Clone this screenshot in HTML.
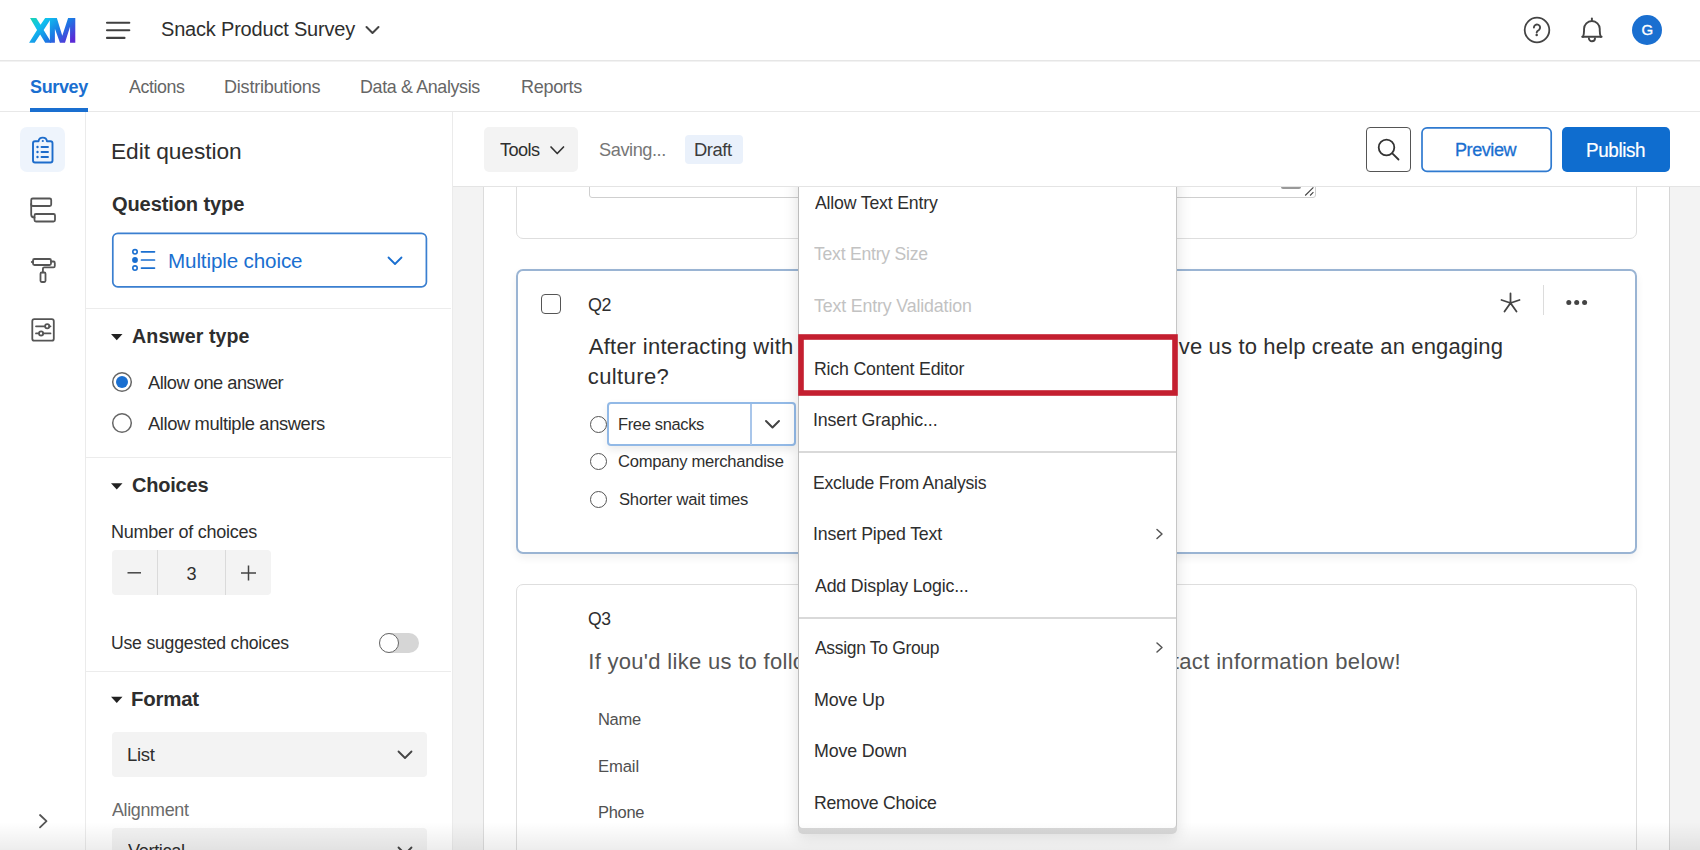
<!DOCTYPE html>
<html><head><meta charset="utf-8"><style>
*{box-sizing:border-box;margin:0;padding:0}
html,body{width:1700px;height:850px;overflow:hidden;background:#fff;font-family:"Liberation Sans",sans-serif}
.a{position:absolute}
.t{position:absolute;white-space:nowrap;line-height:1;transform-origin:0 0}
svg{position:absolute;overflow:visible}
</style></head><body>
<div class="a" style="left:452px;top:112px;width:1248px;height:738px;background:#f3f3f3"></div>
<div class="a" style="left:483px;top:150px;width:1187px;height:700px;background:#fff;border-left:1px solid #dcdcdc;border-right:1.5px solid #d6d6d6"></div>
<div class="a" style="left:516px;top:140px;width:1121px;height:98.5px;border:1.5px solid #dedede;border-radius:7px"></div>
<div class="a" style="left:588.5px;top:140px;width:727px;height:58px;border:1.5px solid #cfcfcf;border-radius:3px"></div>
<div class="a" style="left:1281.2px;top:186.6px;width:19.5px;height:2.6px;background:#999;border-radius:0 0 2px 2px"></div>
<svg style="left:0;top:0" width="1" height="1"><path d="M1305.2 195.5 L1313.4 187.3 M1310.1 195.5 L1313.4 192.2" stroke="#444" stroke-width="1.1"/></svg>
<div class="a" style="left:516px;top:269px;width:1121px;height:285px;border:2px solid #9ab4d3;border-radius:7px;box-shadow:0 4px 9px rgba(0,0,0,0.06)"></div>
<div class="a" style="left:541px;top:294px;width:20px;height:20px;border:1.5px solid #555;border-radius:4px"></div>
<div class="a" style="left:1543px;top:285px;width:1px;height:30px;background:#dcdcdc"></div>
<svg style="left:0;top:0" width="1" height="1">
 <g stroke="#444" stroke-width="1.8" stroke-linecap="round">
  <path d="M1510.5 293.5 V303 M1510.5 303 L1501.5 300 M1510.5 303 L1519.5 300 M1510.5 303 L1504.5 311.5 M1510.5 303 L1516.5 311.5"/>
 </g>
 <g fill="#444"><circle cx="1568.8" cy="302.6" r="2.5"/><circle cx="1576.7" cy="302.6" r="2.5"/><circle cx="1584.6" cy="302.6" r="2.5"/></g>
</svg>
<div class="a" style="left:589.5px;top:415.5px;width:17px;height:17px;border:1.5px solid #555;border-radius:50%"></div>
<div class="a" style="left:589.5px;top:453px;width:17px;height:17px;border:1.5px solid #555;border-radius:50%"></div>
<div class="a" style="left:589.5px;top:490.5px;width:17px;height:17px;border:1.5px solid #555;border-radius:50%"></div>
<div class="a" style="left:607px;top:402px;width:189px;height:44px;background:#fff;border:2px solid #92b9e6;border-radius:4px;box-shadow:0 4px 8px rgba(0,0,0,0.08)"></div>
<div class="a" style="left:749.5px;top:404px;width:2px;height:40.5px;background:#a9c6ea"></div>
<svg style="left:0;top:0" width="1" height="1"><path d="M766 421 L772.5 427.5 L779 421" fill="none" stroke="#444" stroke-width="2" stroke-linecap="round" stroke-linejoin="round"/></svg>

<div class="t" style="left:588.03px;top:295.56px;font-size:18.17px;letter-spacing:-0.336px;font-weight:400;color:#2e2e2e;transform:scaleX(0.985);">Q2</div>
<div class="t" style="left:588.75px;top:335.8px;font-size:22px;letter-spacing:0.246px;font-weight:400;color:#2e2e2e;">After interacting with</div>
<div class="t" style="left:1178.8px;top:335.8px;font-size:22px;letter-spacing:0.158px;font-weight:400;color:#2e2e2e;">ve us to help create an engaging</div>
<div class="t" style="left:587.87px;top:365.55px;font-size:22px;letter-spacing:0.38px;font-weight:400;color:#2e2e2e;">culture?</div>
<div class="t" style="left:617.93px;top:415.71px;font-size:17.1px;letter-spacing:-0.338px;font-weight:400;color:#2e2e2e;transform:scaleX(0.9616);">Free snacks</div>
<div class="t" style="left:618.42px;top:453.46px;font-size:17.1px;letter-spacing:-0.274px;font-weight:400;color:#2e2e2e;transform:scaleX(0.9709);">Company merchandise</div>
<div class="t" style="left:618.59px;top:491.21px;font-size:17.1px;letter-spacing:-0.217px;font-weight:400;color:#2e2e2e;transform:scaleX(0.972);">Shorter wait times</div>
<div class="a" style="left:516px;top:584px;width:1121px;height:300px;border:1.5px solid #dedede;border-radius:7px"></div>
<div class="t" style="left:588.05px;top:610.87px;font-size:17.81px;letter-spacing:-0.323px;font-weight:400;color:#2e2e2e;transform:scaleX(0.9854);">Q3</div>
<div class="t" style="left:588.22px;top:650.55px;font-size:22px;letter-spacing:0.3px;font-weight:400;color:#555;">If you'd like us to follow</div>
<div class="t" style="left:1172.82px;top:650.55px;font-size:22px;letter-spacing:0.35px;font-weight:400;color:#555;">tact information below!</div>
<div class="t" style="left:597.93px;top:711.88px;font-size:16.9px;letter-spacing:-0.311px;font-weight:400;color:#505050;transform:scaleX(0.9779);">Name</div>
<div class="t" style="left:597.92px;top:758.63px;font-size:16.9px;letter-spacing:-0.138px;font-weight:400;color:#505050;transform:scaleX(0.9859);">Email</div>
<div class="t" style="left:598.08px;top:804.74px;font-size:16.9px;letter-spacing:-0.288px;font-weight:400;color:#505050;transform:scaleX(0.9748);">Phone</div>
<div class="a" style="left:798px;top:150px;width:378.5px;height:683.5px;background:#d8d8d8;border-radius:0 0 5px 5px;box-shadow:0 2px 16px rgba(0,0,0,0.13)"></div>
<div class="a" style="left:798px;top:150px;width:378.5px;height:677.5px;background:#fff;border-left:1px solid #bdbdbd;border-right:1px solid #c6c6c6;border-radius:0 0 4px 4px"></div>
<div class="a" style="left:799px;top:451px;width:377px;height:1.5px;background:#d9d9d9"></div>
<div class="a" style="left:799px;top:617px;width:377px;height:1.5px;background:#d9d9d9"></div>
<svg style="left:0;top:0" width="1" height="1"><g fill="none" stroke="#555" stroke-width="1.5" stroke-linecap="round" stroke-linejoin="round">
<path d="M1157 529.5 L1162 534 L1157 538.5"/><path d="M1157 643 L1162 647.5 L1157 652"/></g></svg>

<div class="t" style="left:814.5px;top:194.02px;font-size:18.1px;letter-spacing:-0.188px;font-weight:400;color:#2e2e2e;transform:scaleX(0.9776);">Allow Text Entry</div>
<div class="t" style="left:814.15px;top:245.22px;font-size:18.1px;letter-spacing:-0.232px;font-weight:400;color:#c2c2c2;transform:scaleX(0.9721);">Text Entry Size</div>
<div class="t" style="left:814.14px;top:296.72px;font-size:18.1px;letter-spacing:-0.144px;font-weight:400;color:#c2c2c2;transform:scaleX(0.9819);">Text Entry Validation</div>
<div class="t" style="left:813.58px;top:359.62px;font-size:18.1px;letter-spacing:-0.179px;font-weight:400;color:#2e2e2e;transform:scaleX(0.9788);">Rich Content Editor</div>
<div class="t" style="left:813.4px;top:410.87px;font-size:18.1px;letter-spacing:-0.126px;font-weight:400;color:#2e2e2e;transform:scaleX(0.9836);">Insert Graphic...</div>
<div class="t" style="left:813.29px;top:473.87px;font-size:18.1px;letter-spacing:-0.235px;font-weight:400;color:#2e2e2e;transform:scaleX(0.9735);">Exclude From Analysis</div>
<div class="t" style="left:813.4px;top:525.12px;font-size:18.1px;letter-spacing:-0.163px;font-weight:400;color:#2e2e2e;transform:scaleX(0.98);">Insert Piped Text</div>
<div class="t" style="left:815.0px;top:576.87px;font-size:18.1px;letter-spacing:-0.163px;font-weight:400;color:#2e2e2e;transform:scaleX(0.9801);">Add Display Logic...</div>
<div class="t" style="left:815.0px;top:639.37px;font-size:18.1px;letter-spacing:-0.32px;font-weight:400;color:#2e2e2e;transform:scaleX(0.9652);">Assign To Group</div>
<div class="t" style="left:813.57px;top:690.87px;font-size:18.1px;letter-spacing:-0.135px;font-weight:400;color:#2e2e2e;transform:scaleX(0.9883);">Move Up</div>
<div class="t" style="left:813.57px;top:742.12px;font-size:18.1px;letter-spacing:-0.169px;font-weight:400;color:#2e2e2e;transform:scaleX(0.9853);">Move Down</div>
<div class="t" style="left:813.59px;top:793.62px;font-size:18.1px;letter-spacing:-0.244px;font-weight:400;color:#2e2e2e;transform:scaleX(0.9763);">Remove Choice</div>
<svg style="left:0;top:0" width="1" height="1"><rect x="801" y="337" width="374" height="56" fill="none" stroke="#c41f30" stroke-width="5.6"/></svg>
<div class="a" style="left:452px;top:112px;width:1248px;height:74.5px;background:#fff;border-bottom:1px solid #e4e4e4"></div>
<div class="a" style="left:483.5px;top:127px;width:94.5px;height:45px;background:#f3f3f3;border-radius:5px"></div>
<svg style="left:0;top:0" width="1" height="1"><path d="M551 147 L557.25 153.5 L563.5 147" fill="none" stroke="#333" stroke-width="1.7" stroke-linecap="round" stroke-linejoin="round"/></svg>
<div class="a" style="left:685px;top:135px;width:57.5px;height:29px;background:#eaf1fb;border-radius:4px"></div>
<div class="a" style="left:1366px;top:127px;width:45px;height:45px;border:1.5px solid #555;border-radius:4px"></div>
<svg style="left:0;top:0" width="1" height="1"><g fill="none" stroke="#333" stroke-width="1.8" stroke-linecap="round"><circle cx="1386.5" cy="147.5" r="7.8"/><path d="M1392.3 153.3 L1398.5 159.5"/></g></svg>
<svg style="left:0;top:0" width="1" height="1"><rect x="1422" y="127.8" width="129.2" height="43.6" rx="5" fill="none" stroke="#2f7ad0" stroke-width="1.7"/></svg>
<div class="a" style="left:1562px;top:127px;width:108px;height:45px;background:#0f6dcf;border-radius:5px"></div>

<div class="t" style="left:499.64px;top:140.38px;font-size:19.26px;letter-spacing:-0.593px;font-weight:400;color:#2e2e2e;transform:scaleX(0.943);">Tools</div>
<div class="t" style="left:598.52px;top:140.38px;font-size:19.26px;letter-spacing:-0.467px;font-weight:400;color:#777;transform:scaleX(0.9456);">Saving...</div>
<div class="t" style="left:694.28px;top:140.38px;font-size:19.26px;letter-spacing:-0.436px;font-weight:400;color:#3c3c3c;transform:scaleX(0.9547);">Draft</div>
<div class="t" style="left:1455.31px;top:140.69px;font-size:18.9px;letter-spacing:-0.466px;font-weight:400;color:#1a6fd0;transform:scaleX(0.9557);-webkit-text-stroke:0.3px #1a6fd0;">Preview</div>
<div class="t" style="left:1585.99px;top:141.06px;font-size:19.69px;letter-spacing:-0.409px;font-weight:400;color:#fff;transform:scaleX(0.9587);-webkit-text-stroke:0.2px #fff;">Publish</div>
<div class="a" style="left:0;top:0;width:1700px;height:112px;background:#fff"></div>
<div class="a" style="left:0;top:60px;width:1700px;height:1px;background:#e6e6e6"></div>
<div class="a" style="left:0;top:61px;width:1700px;height:1px;background:#f2f2f2"></div>
<div class="a" style="left:0;top:111px;width:1700px;height:1px;background:#e8e8e8"></div>
<div class="a" style="left:30px;top:108px;width:58px;height:3.5px;background:#1a6fd0"></div>
<svg style="left:0;top:0" width="1" height="1">
 <defs><linearGradient id="xmg" x1="30" y1="13" x2="62" y2="49" gradientUnits="userSpaceOnUse">
  <stop offset="0" stop-color="#1fdb9c"/><stop offset="0.33" stop-color="#0fc0ef"/><stop offset="0.66" stop-color="#1a7ae4"/><stop offset="1" stop-color="#5a2ad6"/></linearGradient></defs>
 <g fill="url(#xmg)">
  <path d="M30.05 17.88 H36.26 L40.53 24.87 L45.19 17.88 H51.41 L43.64 29.92 L51.41 42.74 H45.19 L40.15 34.58 L34.71 42.74 H29.08 L37.04 29.92 Z"/>
  <path d="M49.85 17.88 H56.84 L62.28 35.75 L68.1 17.88 H75.29 V42.74 H70.05 V26.82 L65.0 42.74 H59.95 L54.9 28.76 V42.74 H49.85 Z"/>
 </g>
 <g stroke="#404040" stroke-width="2.1" stroke-linecap="round"><path d="M107 22.7 H129.3 M107 30.3 H129.3 M107 37.9 H124.5"/></g>
 <path d="M366.5 27 L372.5 33 L378.5 27" fill="none" stroke="#444" stroke-width="2" stroke-linecap="round" stroke-linejoin="round"/>
 <circle cx="1537" cy="30" r="12.3" fill="none" stroke="#444" stroke-width="1.8"/>
 <path d="M1533.9 27.6 A3.1 3.1 0 1 1 1538.9 30 Q1536.7 31.2 1536.7 32.6" fill="none" stroke="#444" stroke-width="1.9" stroke-linecap="round"/><circle cx="1536.7" cy="35.1" r="1.25" fill="#444"/>
 <g fill="none" stroke="#444" stroke-width="1.9" stroke-linejoin="round" stroke-linecap="round">
  <path d="M1582.2 36.8 H1601.6"/>
  <path d="M1583 36.8 Q1584.05 34.5 1584.05 30.5 V28.85 A7.85 7.85 0 0 1 1599.75 28.85 V30.5 Q1599.75 34.5 1600.8 36.8"/>
  <path d="M1588.9 38.2 A3.05 3.05 0 0 0 1595 38.2"/><path d="M1591.9 18.4 V20"/>
 </g>
 <circle cx="1647" cy="30" r="15" fill="#1a6fd0"/>
 <text x="1647.3" y="35.3" text-anchor="middle" font-family="Liberation Sans" font-weight="400" font-size="15" fill="#fff" stroke="#fff" stroke-width="0.35">G</text>
</svg>

<div class="t" style="left:160.7px;top:19.1px;font-size:20.35px;letter-spacing:-0.184px;font-weight:400;color:#2e2e2e;transform:scaleX(0.9822);">Snack Product Survey</div>
<div class="t" style="left:29.64px;top:78.09px;font-size:18.6px;letter-spacing:-0.374px;font-weight:700;color:#1a6fd0;transform:scaleX(0.9688);">Survey</div>
<div class="t" style="left:128.8px;top:78.09px;font-size:18.6px;letter-spacing:-0.411px;font-weight:400;color:#666;transform:scaleX(0.9574);">Actions</div>
<div class="t" style="left:224.46px;top:78.09px;font-size:18.6px;letter-spacing:-0.237px;font-weight:400;color:#666;transform:scaleX(0.9708);">Distributions</div>
<div class="t" style="left:360.37px;top:78.09px;font-size:18.6px;letter-spacing:-0.355px;font-weight:400;color:#666;transform:scaleX(0.96);">Data &amp; Analysis</div>
<div class="t" style="left:520.96px;top:78.09px;font-size:18.6px;letter-spacing:-0.315px;font-weight:400;color:#666;transform:scaleX(0.9691);">Reports</div>
<div class="a" style="left:85px;top:112px;width:1px;height:738px;background:#ebebeb"></div>
<div class="a" style="left:20px;top:126.5px;width:45px;height:45.5px;background:#eef4fc;border-radius:7px"></div>
<svg style="left:0;top:0" width="1" height="1">
 <g fill="none" stroke="#1d6ccb" stroke-width="1.9" stroke-linejoin="round" stroke-linecap="round">
  <path d="M38.5 141.3 H35 a2 2 0 0 0 -2 2 V160.5 a2 2 0 0 0 2 2 H50.5 a2 2 0 0 0 2 -2 V143.3 a2 2 0 0 0 -2 -2 H47 A4.3 4.3 0 0 0 38.5 141.3 Z"/>
  <path d="M41.5 147 H48 M41.5 152 H48 M41.5 157 H48"/>
 </g>
 <g fill="#1d6ccb"><circle cx="42.8" cy="141" r="1.1"/><circle cx="37.5" cy="147" r="1.2"/><circle cx="37.5" cy="152" r="1.2"/><circle cx="37.5" cy="157" r="1.2"/></g>
 <g fill="none" stroke="#555" stroke-width="1.8" stroke-linejoin="round" stroke-linecap="round">
  <rect x="31.2" y="198.5" width="20" height="7.5" rx="1.5"/>
  <rect x="34.5" y="214" width="20.5" height="7.5" rx="1.5"/>
  <path d="M31.2 204 V214.5 Q31.2 217.5 34.5 217.5"/>
  <rect x="33" y="259" width="18" height="6" rx="1.5"/>
  <path d="M51 261.5 H53.5 Q54.8 261.5 54.8 263 V266 Q54.8 267.4 53.4 267.4 H44.3 Q42.9 267.4 42.9 268.8 V272.3"/>
  <path d="M33 262 H31.8"/>
  <rect x="40.5" y="272.5" width="5" height="9.5" rx="1.2"/>
  <rect x="32.3" y="319.2" width="21.5" height="21.5" rx="2"/>
  <path d="M36 326.3 H45 M49.3 326.3 H50.5 M36 333.4 H39 M43.2 333.4 H50.5"/>
  <circle cx="47.2" cy="326.3" r="2.1"/><circle cx="41.1" cy="333.4" r="2.1"/>
  <path d="M40 815 L46.5 821.2 L40 827.4"/>
 </g>
</svg>

<div class="a" style="left:451.5px;top:112px;width:1.2px;height:738px;background:#ebebeb"></div>
<div class="a" style="left:86px;top:308px;width:365px;height:1px;background:#ececec"></div>
<div class="a" style="left:86px;top:457px;width:365px;height:1px;background:#ececec"></div>
<div class="a" style="left:86px;top:670.5px;width:365px;height:1px;background:#ececec"></div>
<svg style="left:0;top:0" width="1" height="1"><rect x="112.8" y="233.3" width="313.6" height="53.6" rx="5" fill="none" stroke="#3a7fd0" stroke-width="1.7"/></svg>
<svg style="left:0;top:0" width="1" height="1">
 <g fill="none" stroke="#1a6fd0" stroke-width="1.6"><circle cx="135" cy="251.8" r="2.2"/><circle cx="135" cy="268.1" r="2.2"/></g>
 <circle cx="135" cy="260" r="2.9" fill="#1a6fd0"/>
 <g stroke="#1a6fd0" stroke-width="1.7" stroke-linecap="round"><path d="M141.5 251.8 H154.5 M141.5 260 H154.5 M141.5 268.1 H154.5"/></g>
 <path d="M388.5 257.5 L395 264 L401.5 257.5" fill="none" stroke="#1a6fd0" stroke-width="1.8" stroke-linecap="round" stroke-linejoin="round"/>
 <g fill="#222"><path d="M111 334 H122.5 L116.75 340.2 Z"/><path d="M111 483.2 H122.5 L116.75 489.4 Z"/><path d="M111 696.7 H122.5 L116.75 702.9 Z"/></g>
 <circle cx="122" cy="382" r="9.3" fill="#fff" stroke="#666" stroke-width="1.5"/>
 <circle cx="122" cy="382" r="6" fill="#1a6fd0"/>
 <circle cx="122" cy="423" r="9.3" fill="#fff" stroke="#666" stroke-width="1.5"/>
 <path d="M127.5 572.8 H141" stroke="#444" stroke-width="1.5"/>
 <path d="M241 573 H256 M248.5 565.5 V580.5" stroke="#444" stroke-width="1.5"/>
 <path d="M398.5 751.5 L405 758 L411.5 751.5" fill="none" stroke="#444" stroke-width="1.8" stroke-linecap="round" stroke-linejoin="round"/>
 <path d="M398.5 847.5 L405 854 L411.5 847.5" fill="none" stroke="#444" stroke-width="1.8" stroke-linecap="round" stroke-linejoin="round"/>
</svg>
<div class="a" style="left:112px;top:550px;width:159px;height:45px;background:#f3f3f3;border-radius:4px"></div>
<div class="a" style="left:157px;top:550px;width:1px;height:45px;background:#dadada"></div>
<div class="a" style="left:225px;top:550px;width:1px;height:45px;background:#dadada"></div>
<svg style="left:0;top:0" width="1" height="1">
 <path d="M127.5 572.8 H141" stroke="#444" stroke-width="1.5"/>
 <path d="M241 573 H256 M248.5 565.5 V580.5" stroke="#444" stroke-width="1.5"/>
</svg>
<div class="a" style="left:379px;top:633px;width:40px;height:20px;background:#d6d6d6;border-radius:10px"></div>
<div class="a" style="left:379px;top:633px;width:20px;height:20px;background:#fff;border:1.5px solid #666;border-radius:50%"></div>
<div class="a" style="left:112px;top:732px;width:315px;height:45px;background:#f3f3f3;border-radius:4px"></div>
<div class="a" style="left:112px;top:828px;width:315px;height:45px;background:#f3f3f3;border-radius:4px"></div>
<svg style="left:0;top:0" width="1" height="1">
 <path d="M398.5 751.5 L405 758 L411.5 751.5" fill="none" stroke="#444" stroke-width="1.8" stroke-linecap="round" stroke-linejoin="round"/>
 <path d="M398.5 847.5 L405 854 L411.5 847.5" fill="none" stroke="#444" stroke-width="1.8" stroke-linecap="round" stroke-linejoin="round"/>
</svg>

<div class="t" style="left:111.18px;top:139.5px;font-size:22.82px;letter-spacing:-0.051px;font-weight:400;color:#2e2e2e;transform:scaleX(0.9952);">Edit question</div>
<div class="t" style="left:112.2px;top:194.2px;font-size:20.35px;letter-spacing:-0.139px;font-weight:700;color:#2e2e2e;transform:scaleX(0.9875);">Question type</div>
<div class="t" style="left:167.95px;top:250.51px;font-size:20.93px;letter-spacing:-0.136px;font-weight:400;color:#1a6fd0;transform:scaleX(0.9858);">Multiple choice</div>
<div class="t" style="left:132.11px;top:326.82px;font-size:19.62px;letter-spacing:0.073px;font-weight:700;color:#2e2e2e;">Answer type</div>
<div class="t" style="left:147.5px;top:372.88px;font-size:19.26px;letter-spacing:-0.506px;font-weight:400;color:#2e2e2e;transform:scaleX(0.9469);">Allow one answer</div>
<div class="t" style="left:147.5px;top:414.38px;font-size:19.26px;letter-spacing:-0.415px;font-weight:400;color:#2e2e2e;transform:scaleX(0.9531);">Allow multiple answers</div>
<div class="t" style="left:131.7px;top:475.2px;font-size:20.35px;letter-spacing:-0.218px;font-weight:700;color:#2e2e2e;transform:scaleX(0.9829);">Choices</div>
<div class="t" style="left:110.56px;top:522.5px;font-size:18.53px;letter-spacing:-0.249px;font-weight:400;color:#2e2e2e;transform:scaleX(0.9732);">Number of choices</div>
<div class="t" style="left:186.45px;top:564.56px;font-size:18.17px;letter-spacing:0.0px;font-weight:400;color:#2e2e2e;">3</div>
<div class="t" style="left:110.77px;top:634.38px;font-size:18.02px;letter-spacing:-0.204px;font-weight:400;color:#2e2e2e;transform:scaleX(0.9774);">Use suggested choices</div>
<div class="t" style="left:131.07px;top:688.83px;font-size:20.78px;letter-spacing:-0.223px;font-weight:700;color:#2e2e2e;transform:scaleX(0.9836);">Format</div>
<div class="t" style="left:126.82px;top:745.39px;font-size:19.19px;letter-spacing:-0.311px;font-weight:400;color:#2e2e2e;transform:scaleX(0.966);">List</div>
<div class="t" style="left:112.0px;top:800.89px;font-size:18.6px;letter-spacing:-0.361px;font-weight:400;color:#6a6a6a;transform:scaleX(0.9639);">Alignment</div>
<div class="t" style="left:128.0px;top:840.89px;font-size:19.19px;letter-spacing:-0.423px;font-weight:400;color:#2e2e2e;transform:scaleX(0.9496);">Vertical</div>
<div class="a" style="left:0;top:822px;width:1700px;height:28px;background:linear-gradient(rgba(0,0,0,0),rgba(0,0,0,0.07))"></div>
</body></html>
